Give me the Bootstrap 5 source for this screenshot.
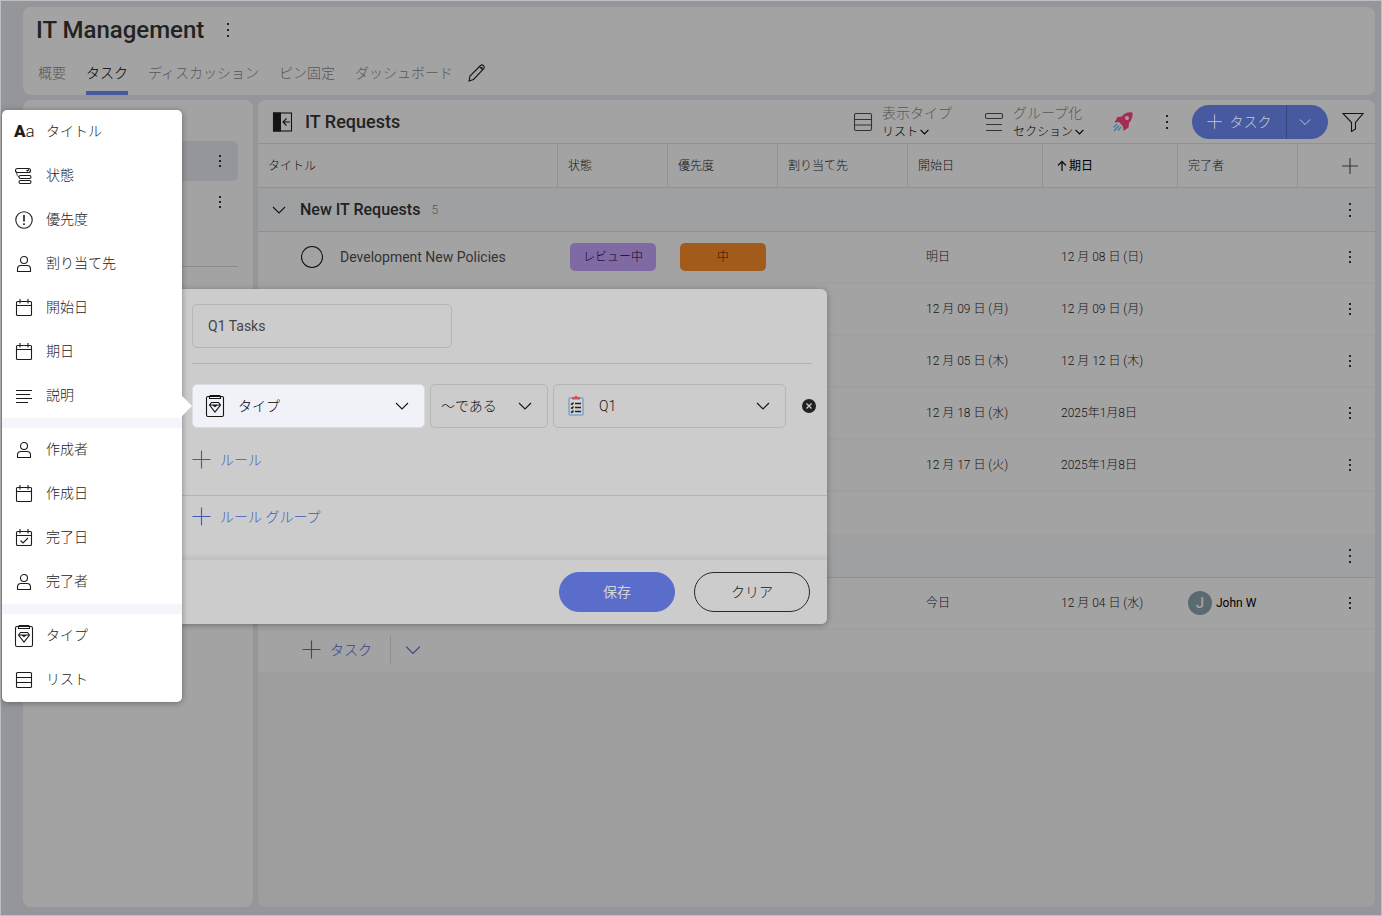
<!DOCTYPE html>
<html lang="ja">
<head>
<meta charset="utf-8">
<meta name="viewport" content="width=device-width, initial-scale=1">
<title>IT Management</title>
<link rel="stylesheet" href="https://cdn.jsdelivr.net/npm/bootstrap@5.3.0/dist/css/bootstrap.min.css">
<style>
:root {
  --page: #95969b;
  --panel: #a3a3a3;
  --line: #8f9295;
  --ink: #141414;
  --accent: #47599f;
}
body {
  font-family: Roboto, "Noto Sans CJK JP", sans-serif;
  font-weight: 300;
  font-size: 14px;
  line-height: 20px;
  color: var(--ink);
  background: var(--page);
}
button, input, select { font: inherit; color: inherit; }
svg { display: block; flex: none; fill: none; stroke: currentColor; stroke-width: 1.1; }
svg.solid { fill: currentColor; stroke: none; color: #222; }
button { background: none; border: 0; padding: 0; }
.shell { border: 1px solid #bebebe; padding: 6px 6px 8px 22px; gap: 5px; }
.shell-body { gap: 5px; }
.panel { background: var(--panel); border-radius: 8px; }
.dots { width: 12px; height: 20px; }

.page-head { height: 88px; padding: 0 13px; }
.page-head h1 { font-size: 24px; line-height: 46px; font-weight: 500; margin: 0; color: #222; }
.page-head .dots { margin-left: 18px; }
.tabs { gap: 20px; padding: 0 2px; }
.tabs a { color: #575757; text-decoration: none; line-height: 40px; height: 42px; border-bottom: 4px solid transparent; }
.tabs a.current { color: #000; border-color: var(--accent); }
.tabs .edit { margin: 0 0 2px -6px; }

.side { width: 230px; padding: 41px 15px 0; }
.side-item { height: 40px; border-radius: 5px; padding-right: 12px; margin-bottom: 1px; }
.side-item.current { background: #95969b; }
.side hr { margin: 44px 0 0; opacity: 1; border-color: #8b8b8b; }

.board { background: #9e9e9f; min-width: 0; overflow: hidden; }
.toolbar { height: 43px; background: var(--panel); padding: 0 11px 0 14px; }
.toolbar h2 { font-size: 18px; font-weight: 500; margin: 0 0 0 11px; color: #222; }
.view-option { gap: 9px; text-align: left; }
.view-option span { display: flex; align-items: center; }
.view-option + .view-option { margin-left: 32px; }
.option-name { font-size: 14px; color: #575757; height: 20px; }
.option-value { font-size: 12px; height: 18px; color: #000; gap: 1px; }
.boost { margin: 0 26px; }
.split { height: 34px; border-radius: 17px; background: var(--accent); color: #c8cbd6; overflow: hidden; margin: 0 14px 0 19px; }
.split-main { width: 94px; gap: 7px; }
.split-more { width: 42px; padding-right: 5px; border-left: 1px solid #36447b; }

.tasks { table-layout: fixed; width: 100%; font-size: 12px; background: var(--panel); border-collapse: separate; border-spacing: 0; }
.tasks th { height: 45px; padding: 0 10px; font-weight: 300; font-size: 12px; border: 1px solid var(--line); border-width: 1px 1px 1px 0; }
.tasks th:last-child { border-right: 0; }
.tasks td { height: 52px; padding: 0 18px; border-bottom: 2px solid #9f9f9f; white-space: nowrap; }
.tasks td.tight { padding: 0 10px 0 12px; }
.tasks td.who { padding: 0 10px; }
.tasks .group td { height: 44px; background: #9ea0a2; border-bottom: 1px solid #8d9094; padding: 0 14px; }
.tasks .spacer td { height: 42px; border: 0; }
.tasks .end, .tasks .group .end { padding: 0 19px 0 0; }
.tasks .end svg { margin-left: auto; }
.task-title { font-size: 14px; font-weight: 400; color: #333; }
.group-title { font-size: 16px; font-weight: 500; color: #222; margin: 0 11px 0 14px; }
.pill { width: 86px; height: 28px; border-radius: 5px; font-size: 12px; line-height: 28px; text-align: center; }
.pill-review { background: #7f6aa3; color: #100025; }
.pill-mid { background: #a35b1c; color: #331100; }
.avatar { width: 24px; height: 24px; border-radius: 50%; background: #5b6a70; color: #a3a3a3; font-size: 15px; font-weight: 500; }
.add-row { height: 42px; background: var(--panel); padding: 0 0 2px 44px; color: #35468c; }
.add-row .more { width: 44px; height: 28px; border-left: 1px solid #8e8e8e; margin-left: 18px; }

.editor { position: absolute; left: 177px; top: 289px; width: 650px; background: #ccc; border-radius: 6px; box-shadow: 0 1px 6px rgba(0,0,0,.3); padding-top: 15px; }
.field { height: 44px; border: 1px solid #b6b6b6; border-radius: 5px; background: transparent; appearance: none; outline: 0; width: 100%; }
.name-field { display: block; width: 260px; margin-left: 15px; padding: 0 15px; font-weight: 400; color: #444; }
.rules { padding: 15px 15px 25px; }
.rules hr { margin: 0; border-color: #b3b3b3; opacity: 1; }
.rule { margin: 20px 0 22px; gap: 5px; }
.pick { position: relative; }
.pick .chev, .pick .lead-icon { position: absolute; top: 0; bottom: 0; margin: auto 0; pointer-events: none; }
.pick .chev { right: 16px; }
.pick .lead-icon { left: 13px; }
.pick-wide { flex: 1 1 0; }
.pick-wide .field { padding-left: 45px; }
.pick-short { flex: 0 0 118px; }
.pick-short .field { padding-left: 10px; }
.field.active { background: #f1f2f8; border-color: #dadce4; color: #000; }
.remove { margin: 0 -4px 0 11px; }
.add-link { color: #4459c0; gap: 8px; }
.rule-group { border-top: 1px solid #b3b3b3; padding: 11px 15px 33px; }
.editor-foot { height: 64px; padding: 0 17px; gap: 19px; box-shadow: 0 -2px 6px rgba(0,0,0,.09); border-radius: 0 0 6px 6px; background: #ccc; }
.round { width: 116px; height: 40px; border-radius: 20px; border: 1px solid #2a2a2a; }
.round.save { background: #5a6dcb; border-color: #5a6dcb; color: #d4d4d4; font-weight: 400; }

.field-menu { position: absolute; left: 2px; top: 110px; width: 180px; background: #fff; border-radius: 5px; box-shadow: 0 1px 6px rgba(0,0,0,.35); margin: 0; padding: 0; list-style: none; color: #1c1c1c; }
.field-menu::after { content: ""; position: absolute; left: 100%; top: 286px; border: 10px solid transparent; border-left-color: #fff; border-right: 0; }
.field-menu button { height: 44px; padding: 0 12px 2px; gap: 12px; width: 100%; }
.field-menu svg { margin-top: 2px; }
.field-menu .band { height: 10px; background: #f5f6fb; }
.aa { width: 20px; font-size: 17px; font-weight: 300; }
.aa b { font-weight: 900; }
</style>
</head>
<body>
<svg width="0" height="0" class="position-absolute" aria-hidden="true">
  <symbol id="i-dots" viewBox="0 0 12 20"><path d="M5 3h2v2H5zM5 9h2v2H5zM5 15h2v2H5z"/></symbol>
  <symbol id="i-dots-s" viewBox="0 0 12 20"><path d="M5 4h2v2H5zM5 9h2v2H5zM5 14h2v2H5z"/></symbol>
  <symbol id="i-chev" viewBox="0 0 14 14"><path d="M1 4l6 6 6-6"/></symbol>
  <symbol id="i-plus" viewBox="0 0 20 20"><path d="M9.500 .500v18M.500 9.500h18"/></symbol>
  <symbol id="i-rows" viewBox="0 0 20 20"><rect x="1.500" y="1.500" width="17" height="17" rx="1.500"/><path d="M1.500 7.500h17M1.500 13h17"/></symbol>
  <symbol id="i-rows-s" viewBox="0 0 20 20"><rect x="2.500" y="2.500" width="15" height="15" rx="1"/><path d="M2.500 7.500h15M2.500 12.500h15"/></symbol>
  <symbol id="i-person" viewBox="0 0 20 20"><circle cx="10" cy="6" r="3.500"/><path d="M3.500 17.500v-2.500q0-3.500 3.500-3.500h6q3.500 0 3.500 3.500v2.500z"/></symbol>
  <symbol id="i-cal" viewBox="0 0 20 20"><rect x="2.500" y="3.500" width="15" height="14" rx="1"/><path d="M2.500 7.500h15M6 1v4.500M14 1v4.500"/></symbol>
  <symbol id="i-type" viewBox="0 0 20 24"><rect x="1.500" y="2.500" width="17" height="20" rx="1.500"/><path d="M4.500 4v-1.500q0-1 1-1h9q1 0 1 1v2h-11z"/><path d="M6.500 8.500h7l2 2.500-5.500 7-5.500-7zM4.500 11h11M8 11l2 1.500 2-1.500"/></symbol>
</svg>

<div class="shell min-vh-100 d-flex flex-column">
  <header class="panel page-head d-flex flex-column justify-content-between">
    <div class="d-flex align-items-center">
      <h1>IT Management</h1>
      <button class="dots" aria-label="メニュー"><svg class="solid" width="12" height="20"><use href="#i-dots"/></svg></button>
    </div>
    <nav class="tabs d-flex">
      <a href="#">概要</a>
      <a href="#" class="current" aria-current="page">タスク</a>
      <a href="#">ディスカッション</a>
      <a href="#">ピン固定</a>
      <a href="#">ダッシュボード</a>
      <button class="edit" aria-label="編集"><svg width="20" height="20" viewBox="0 0 20 20"><path d="M2 18l1-5L13.500 2.500q1.500-1.200 3 .200 1.500 1.500.300 3L6.500 16.500zM12.500 3.500l3.500 3.500M14.500 5.500l1-1"/></svg></button>
    </nav>
  </header>

  <div class="shell-body d-flex flex-grow-1">
    <aside class="panel side flex-shrink-0">
      <div class="side-item current d-flex align-items-center justify-content-end"><button class="dots" aria-label="メニュー"><svg class="solid" width="12" height="20"><use href="#i-dots-s"/></svg></button></div>
      <div class="side-item d-flex align-items-center justify-content-end"><button class="dots" aria-label="メニュー"><svg class="solid" width="12" height="20"><use href="#i-dots-s"/></svg></button></div>
      <hr>
    </aside>

    <main class="panel board flex-grow-1">
      <div class="toolbar d-flex align-items-center">
        <button aria-label="サイドバー"><svg width="22" height="20" viewBox="0 0 22 20"><rect x="1.500" y="1" width="18" height="18"/><path d="M1 .500h8v19H1z" fill="currentColor" stroke="none"/><path d="M18 10h-6.500M14.500 6.500L11 10l3.500 3.500"/></svg></button>
        <h2 class="me-auto">IT Requests</h2>
        <button class="view-option d-flex align-items-center">
          <svg width="20" height="20" color="#333"><use href="#i-rows"/></svg>
          <span class="flex-column align-items-start"><span class="option-name">表示タイプ</span><span class="option-value">リスト<svg width="11" height="11" viewBox="0 0 14 14"><path d="M2 5l5 5 5-5" stroke-width="1.500"/></svg></span></span>
        </button>
        <button class="view-option d-flex align-items-center">
          <svg width="20" height="20" viewBox="0 0 20 20" color="#333"><rect x="1.500" y="1.500" width="17" height="5" rx="1.500"/><path d="M2 12.500h16M2 18.500h16"/></svg>
          <span class="flex-column align-items-start"><span class="option-name">グループ化</span><span class="option-value">セクション<svg width="11" height="11" viewBox="0 0 14 14"><path d="M2 5l5 5 5-5" stroke-width="1.500"/></svg></span></span>
        </button>
        <button class="boost" aria-label="ロケット"><svg class="solid" width="24" height="22" viewBox="0 0 24 22"><path d="M21.500 1.500q-7-1-10.500 4l-4.500.500-3 5.500 4.500-.500 4 4.500.500 4.500 5-3.500.500-4.500q4-4 3.500-10.500z" fill="#a52c56"/><circle cx="16" cy="7" r="2" fill="#a3a3a3"/><path d="M6 13l-3.500 3.500M8 14.500l-5 5.500M10 16l-3 3.500" stroke="#4777a5" stroke-width="1.300"/></svg></button>
        <button class="dots" aria-label="メニュー"><svg class="solid" width="12" height="20"><use href="#i-dots"/></svg></button>
        <div class="split d-flex">
          <button class="split-main d-flex align-items-center justify-content-center"><svg width="16" height="16"><use href="#i-plus"/></svg>タスク</button>
          <button class="split-more d-flex align-items-center justify-content-center" aria-label="その他"><svg width="12" height="12"><use href="#i-chev"/></svg></button>
        </div>
        <button aria-label="フィルター"><svg width="22" height="20" viewBox="0 0 22 20"><path d="M1 1.500h20l-7.500 9v6.500l-4 2.500v-9z"/></svg></button>
      </div>

      <table class="tasks">
        <colgroup><col><col width="110"><col width="110"><col width="130"><col width="135"><col width="135"><col width="120"><col width="77"></colgroup>
        <thead>
          <tr><th>タイトル</th><th>状態</th><th>優先度</th><th>割り当て先</th><th>開始日</th>
            <th><span class="d-flex align-items-center ps-1"><svg width="12" height="12" viewBox="0 0 12 12"><path d="M5 11V1.500M1 5.500l4-4 4 4" stroke-width="1.300"/></svg><span class="fw-normal text-black">期日</span></span></th>
            <th>完了者</th><th><button class="d-block ms-auto me-1" aria-label="列を追加"><svg width="20" height="18" viewBox="0 0 20 18" color="#333"><path d="M9 1v16M1 9h16"/></svg></button></th></tr>
        </thead>
        <tbody>
          <tr class="group"><td colspan="7"><span class="d-flex align-items-center"><svg width="14" height="14"><use href="#i-chev"/></svg><span class="group-title">New IT Requests</span><span class="text-black-50">5</span></span></td><td class="end"><svg class="solid" width="12" height="20"><use href="#i-dots"/></svg></td></tr>
          <tr><td><span class="d-flex align-items-center ps-4"><svg width="24" height="24" viewBox="0 0 24 24"><circle cx="12" cy="12" r="10.500"/></svg><span class="task-title ms-3">Development New Policies</span></span></td>
            <td class="tight"><div class="pill pill-review">レビュー中</div></td><td class="tight"><div class="pill pill-mid">中</div></td><td></td><td>明日</td><td>12 月 08 日 (日)</td><td></td><td class="end"><svg class="solid" width="12" height="20"><use href="#i-dots-s"/></svg></td></tr>
          <tr><td colspan="4"></td><td>12 月 09 日 (月)</td><td>12 月 09 日 (月)</td><td></td><td class="end"><svg class="solid" width="12" height="20"><use href="#i-dots-s"/></svg></td></tr>
          <tr><td colspan="4"></td><td>12 月 05 日 (木)</td><td>12 月 12 日 (木)</td><td></td><td class="end"><svg class="solid" width="12" height="20"><use href="#i-dots-s"/></svg></td></tr>
          <tr><td colspan="4"></td><td>12 月 18 日 (水)</td><td>2025年1月8日</td><td></td><td class="end"><svg class="solid" width="12" height="20"><use href="#i-dots-s"/></svg></td></tr>
          <tr><td colspan="4"></td><td>12 月 17 日 (火)</td><td>2025年1月8日</td><td></td><td class="end"><svg class="solid" width="12" height="20"><use href="#i-dots-s"/></svg></td></tr>
          <tr class="spacer"><td colspan="8"></td></tr>
          <tr class="group"><td colspan="7"></td><td class="end"><svg class="solid" width="12" height="20"><use href="#i-dots"/></svg></td></tr>
          <tr><td colspan="4"></td><td>今日</td><td>12 月 04 日 (水)</td><td class="who"><span class="d-flex align-items-center gap-1 text-black fw-normal"><span class="avatar d-flex align-items-center justify-content-center">J</span>John W</span></td><td class="end"><svg class="solid" width="12" height="20"><use href="#i-dots-s"/></svg></td></tr>
        </tbody>
      </table>
      <div class="add-row d-flex align-items-center">
        <button class="d-flex align-items-center gap-2"><svg width="20" height="20"><use href="#i-plus"/></svg>タスク</button>
        <button class="more d-flex align-items-center justify-content-center" aria-label="その他"><svg width="16" height="16"><use href="#i-chev"/></svg></button>
      </div>
    </main>
  </div>
</div>

<form class="editor">
  <input class="field name-field" value="Q1 Tasks" aria-label="名前">
  <div class="rules">
    <hr>
    <div class="rule d-flex align-items-center">
      <div class="pick pick-wide"><svg class="lead-icon" width="20" height="24"><use href="#i-type"/></svg><select class="field active" aria-label="項目"><option>タイプ</option></select><svg class="chev" width="14" height="14"><use href="#i-chev"/></svg></div>
      <div class="pick pick-short"><select class="field" aria-label="条件"><option>～である</option></select><svg class="chev" width="14" height="14"><use href="#i-chev"/></svg></div>
      <div class="pick pick-wide"><svg class="lead-icon" width="20" height="22" viewBox="0 0 20 22"><rect x="3" y="3" width="14" height="17" rx="1" stroke="#7da5cc" stroke-width="1.500" fill="#d2d2d2"/><path d="M6 4.500V2h2.500q1.500-3 3 0H14v2.500z" fill="#d05055" stroke="none"/><path d="M9 8.500h6M9 12.500h6M9 16.500h6M5 8.500l1 1 1.500-2M5 12.500l1 1 1.500-2M5 16.500l1 1 1.500-2" stroke="#222" stroke-width="1.300"/></svg><select class="field" aria-label="値"><option>Q1</option></select><svg class="chev" width="14" height="14"><use href="#i-chev"/></svg></div>
      <button type="button" class="remove" aria-label="削除"><svg width="14" height="14" viewBox="0 0 14 14"><circle cx="7" cy="7" r="7" fill="#222" stroke="none"/><path d="M4.500 4.500l5 5M9.500 4.500l-5 5" stroke="#ccc" stroke-width="1.300"/></svg></button>
    </div>
    <button type="button" class="add-link d-flex align-items-center"><svg width="20" height="20"><use href="#i-plus"/></svg>ルール</button>
  </div>
  <div class="rule-group"><button type="button" class="add-link d-flex align-items-center"><svg width="20" height="20"><use href="#i-plus"/></svg>ルール グループ</button></div>
  <div class="editor-foot d-flex align-items-center justify-content-end">
    <button type="button" class="round save">保存</button>
    <button type="button" class="round">クリア</button>
  </div>
</form>

<ul class="field-menu">
  <li><button class="d-flex align-items-center"><span class="aa d-flex align-items-center"><b>A</b>a</span>タイトル</button></li>
  <li><button class="d-flex align-items-center"><svg width="20" height="20" viewBox="0 0 20 20"><rect x="1.500" y="2.500" width="15" height="4" rx="2"/><path d="M12.500 4l1 1L15 3.500"/><rect x="5" y="9.500" width="12" height="3" rx="1.500"/><rect x="5" y="14.500" width="12" height="3" rx="1.500"/><path d="M2.500 6.500q0 3.500 2.500 4.500" stroke-width=".8"/></svg>状態</button></li>
  <li><button class="d-flex align-items-center"><svg width="20" height="20" viewBox="0 0 20 20"><circle cx="10" cy="10" r="8.200"/><path d="M10 5v6.500M10 13.200v1.800" stroke-width="1.600"/></svg>優先度</button></li>
  <li><button class="d-flex align-items-center"><svg width="20" height="20"><use href="#i-person"/></svg>割り当て先</button></li>
  <li><button class="d-flex align-items-center"><svg width="20" height="20"><use href="#i-cal"/></svg>開始日</button></li>
  <li><button class="d-flex align-items-center"><svg width="20" height="20"><use href="#i-cal"/></svg>期日</button></li>
  <li><button class="d-flex align-items-center"><svg width="20" height="20" viewBox="0 0 20 20"><path d="M2 4.500h16M2 8.500h14M2 12.500h16M2 16.500h12"/></svg>説明</button></li>
  <li class="band"></li>
  <li><button class="d-flex align-items-center"><svg width="20" height="20"><use href="#i-person"/></svg>作成者</button></li>
  <li><button class="d-flex align-items-center"><svg width="20" height="20"><use href="#i-cal"/></svg>作成日</button></li>
  <li><button class="d-flex align-items-center"><svg width="20" height="20" viewBox="0 0 20 20"><use href="#i-cal"/><path d="M6.500 12.500l2.500 2.500 5-5"/></svg>完了日</button></li>
  <li><button class="d-flex align-items-center"><svg width="20" height="20"><use href="#i-person"/></svg>完了者</button></li>
  <li class="band"></li>
  <li><button class="d-flex align-items-center"><svg width="20" height="24"><use href="#i-type"/></svg>タイプ</button></li>
  <li><button class="d-flex align-items-center"><svg width="20" height="20"><use href="#i-rows-s"/></svg>リスト</button></li>
</ul>
<script src="https://cdn.jsdelivr.net/npm/bootstrap@5.3.0/dist/js/bootstrap.bundle.min.js"></script>
</body>
</html>
